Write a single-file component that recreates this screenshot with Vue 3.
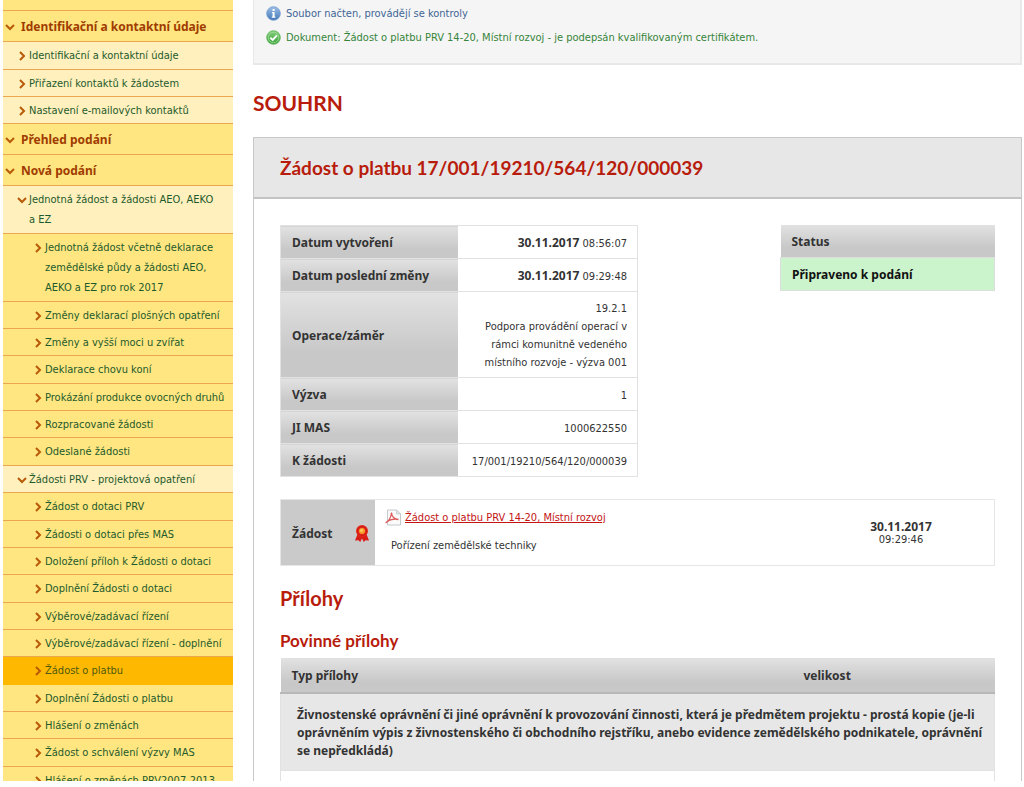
<script setup>
const menu = [
  {
    title: 'Identifikační a kontaktní údaje',
    items: [
      { label: 'Identifikační a kontaktní údaje' },
      { label: 'Přiřazení kontaktů k žádostem' },
      { label: 'Nastavení e-mailových kontaktů' }
    ]
  },
  { title: 'Přehled podání', items: [] },
  {
    title: 'Nová podání',
    items: [
      {
        label: 'Jednotná žádost a žádosti AEO, AEKO a EZ',
        children: [
          'Jednotná žádost včetně deklarace zemědělské půdy a žádosti AEO, AEKO a EZ pro rok 2017',
          'Změny deklarací plošných opatření',
          'Změny a vyšší moci u zvířat',
          'Deklarace chovu koní',
          'Prokázání produkce ovocných druhů',
          'Rozpracované žádosti',
          'Odeslané žádosti'
        ]
      },
      {
        label: 'Žádosti PRV - projektová opatření',
        children: [
          'Žádost o dotaci PRV',
          'Žádosti o dotaci přes MAS',
          'Doložení příloh k Žádosti o dotaci',
          'Doplnění Žádosti o dotaci',
          'Výběrové/zadávací řízení',
          'Výběrové/zadávací řízení - doplnění',
          'Žádost o platbu',
          'Doplnění Žádosti o platbu',
          'Hlášení o změnách',
          'Žádost o schválení výzvy MAS',
          'Hlášení o změnách PRV2007-2013'
        ]
      }
    ]
  }
]
const active = 'Žádost o platbu'
</script>

<template>
  <div class="page">
    <nav class="menu">
      <div class="menu-top"></div>
      <template v-for="section in menu" :key="section.title">
        <a href="#" class="section">
          <svg class="arrow" viewBox="0 0 10 10"><path d="M1 3 5 7 9 3" /></svg>
          <span>{{ section.title }}</span>
        </a>
        <ul v-if="section.items.length" class="list">
          <li v-for="item in section.items" :key="item.label">
            <a href="#" class="item">
              <svg v-if="item.children" class="arrow" viewBox="0 0 10 10"><path d="M1 3 5 7 9 3" /></svg>
              <svg v-else class="arrow" viewBox="0 0 10 10"><path d="M3 1 7 5 3 9" /></svg>
              <span>{{ item.label }}</span>
            </a>
            <ul v-if="item.children" class="list">
              <li v-for="leaf in item.children" :key="leaf">
                <a href="#" class="item leaf" :class="{ active: leaf === active }">
                  <svg class="arrow" viewBox="0 0 10 10"><path d="M3 1 7 5 3 9" /></svg>
                  <span>{{ leaf }}</span>
                </a>
              </li>
            </ul>
          </li>
        </ul>
      </template>
    </nav>

    <main class="content">
      <section class="messages">
        <p class="msg info">
          <svg viewBox="0 0 16 16">
            <defs><linearGradient id="blue" x1="0" y1="0" x2="0" y2="1"><stop offset="0" stop-color="#9dbfe6" /><stop offset="1" stop-color="#4478b8" /></linearGradient></defs>
            <circle cx="8" cy="8" r="7.3" fill="url(#blue)" stroke="#6b97cc" stroke-width=".8" />
            <path d="M7 3.2h2.2v2H7zM6.4 6.3h2.8v5h.8v1.2H6.200v-1.200H7V7.500h-.6z" fill="#fff" />
          </svg>
          <span>Soubor načten, provádějí se kontroly</span>
        </p>
        <p class="msg ok">
          <svg viewBox="0 0 16 16">
            <defs><linearGradient id="green" x1="0" y1="0" x2="0" y2="1"><stop offset="0" stop-color="#85cf7c" /><stop offset="1" stop-color="#38a238" /></linearGradient></defs>
            <circle cx="8" cy="8" r="7.3" fill="url(#green)" stroke="#58b355" stroke-width=".8" />
            <circle cx="8" cy="8" r="5.6" fill="none" stroke="#a9dda3" stroke-width=".8" />
            <path d="M4.6 8.2 7.2 10.6 11.6 5.8" fill="none" stroke="#fff" stroke-width="2" />
          </svg>
          <span>Dokument: Žádost o platbu PRV 14-20, Místní rozvoj - je podepsán kvalifikovaným certifikátem.</span>
        </p>
      </section>

      <h1>SOUHRN</h1>

      <section class="card">
        <h2 class="card-title">Žádost o platbu 17/001/19210/564/120/000039</h2>
        <div class="card-body">
          <div class="overview">
            <table class="grid details">
              <tbody>
                <tr><th scope="row">Datum vytvoření</th><td><b>30.11.2017</b> 08:56:07</td></tr>
                <tr><th scope="row">Datum poslední změny</th><td><b>30.11.2017</b> 09:29:48</td></tr>
                <tr><th scope="row">Operace/záměr</th><td class="tall">19.2.1<br>Podpora provádění operací v rámci komunitně vedeného místního rozvoje - výzva 001</td></tr>
                <tr><th scope="row">Výzva</th><td>1</td></tr>
                <tr><th scope="row">JI MAS</th><td>1000622550</td></tr>
                <tr><th scope="row">K žádosti</th><td>17/001/19210/564/120/000039</td></tr>
              </tbody>
            </table>
            <table class="grid status">
              <thead><tr><th scope="col">Status</th></tr></thead>
              <tbody><tr><td>Připraveno k podání</td></tr></tbody>
            </table>
          </div>

          <div class="request">
            <div class="request-label">
              <b>Žádost</b>
              <svg class="rosette" viewBox="0 0 14 17">
                <path d="M3 8 0 15.6l3.400-.4 1.800 1.800L7 13.600 8.800 17l1.800-1.800 3.400.4L11 8z" fill="#d91e18" />
                <circle cx="7" cy="6" r="6" fill="#e32a1c" />
                <circle cx="7" cy="6" r="4.500" fill="none" stroke="#c41612" stroke-width=".8" />
                <circle cx="7" cy="6" r="3" fill="#f7a02b" />
                <circle cx="6.500" cy="5.400" r="1.400" fill="#fbd067" />
              </svg>
            </div>
            <div class="request-main">
              <div class="file">
                <svg class="pdf" viewBox="0 0 16 16">
                  <path d="M2.500.5h9l4 4v11h-13z" fill="#fbfbfb" stroke="#c4c8cc" />
                  <path d="M11.500.5v4h4z" fill="#dfe3e6" stroke="#c4c8cc" stroke-width=".7" />
                  <path d="M.5 13.500C3 12.500 6.500 8 6.500 3M6.500 3C6.500 7 9.500 10 13.500 10M1.500 12.500C4 10.500 9 9.300 13.500 10" fill="none" stroke="#dd5a5c" stroke-width="1.300" />
                </svg>
                <a href="#">Žádost o platbu PRV 14-20, Místní rozvoj</a>
              </div>
              <p>Pořízení zemědělské techniky</p>
            </div>
            <div class="request-date"><b>30.11.2017</b><span>09:29:46</span></div>
          </div>

          <h2>Přílohy</h2>
          <h3>Povinné přílohy</h3>
          <table class="grid files">
            <thead>
              <tr><th scope="col">Typ přílohy</th><th scope="col" class="size">velikost</th></tr>
            </thead>
            <tbody>
              <tr><td colspan="2" class="kind">Živnostenské oprávnění či jiné oprávnění k provozování činnosti, která je předmětem projektu - prostá kopie (je-li oprávněním výpis z živnostenského či obchodního rejstříku, anebo evidence zemědělského podnikatele, oprávnění se nepředkládá)</td></tr>
              <tr><td></td><td></td></tr>
            </tbody>
          </table>
        </div>
      </section>
    </main>
  </div>
</template>

<style>
body { margin: 0; background: #fff; }
</style>

<style scoped>
.page {
  display: flex;
  gap: 20px;
  height: calc(100vh - 6px);
  padding: 0 2px 0 3px;
  overflow: hidden;
  box-sizing: border-box;
  font-family: "DejaVu Sans Condensed", "DejaVu Sans", sans-serif;
  font-size: 11px;
  line-height: 17px;
  color: #333;
}
b, th, .section, .kind, .status td { font: bold 12px/18px "Noto Sans", sans-serif; }
p, h1, h2, h3, ul { margin: 0; padding: 0; }
h1, h2, h3 { font-family: Lato, sans-serif; font-weight: bold; color: #b81c0c; }

.menu { flex: 0 0 230px; }
.menu-top { height: 10px; background: #ffe680; border-bottom: 1px solid #eba650; }
.list { list-style: none; }
.section, .item {
  display: flex;
  align-items: flex-start;
  box-sizing: border-box;
  border-bottom: 1px solid #eba650;
  text-decoration: none;
}
.section { min-height: 31px; padding: 7px 4px 5px 2px; background: #ffe680; color: #a03c00; }
.section .arrow { margin: 4px 6px 0 0; }
.item { min-height: 27px; padding: 4px 11px 2px 14px; background: #fff0bd; color: #1d5a2c; line-height: 20px; }
.item .arrow { margin: 5px 2px 0 0; }
.leaf { padding-right: 6px; padding-left: 30px; background: #ffe680; }
.list li:nth-child(3n + 1) > .item { padding-bottom: 3px; }
.active { background: #ffb800; border-bottom-color: #ffb800; color: #4c5a10; }
.arrow { flex: none; width: 10px; height: 10px; }
.arrow path { fill: none; stroke: #b85a08; stroke-width: 2; }

.content { flex: 1; min-width: 0; }
.messages {
  padding: 1px 12px 14px;
  border: solid #e8e8e8;
  border-width: 0 2px 2px 1px;
  background: #f5f5f5;
}
.msg { display: flex; align-items: center; gap: 5px; height: 24px; }
.msg svg { flex: none; width: 15px; height: 15px; }
.info { color: #3f6596; }
.ok { color: #36843a; }
h1 { margin: 25px 0 21px; font-size: 21px; line-height: 26px; }

.card { border: 1px solid #c8c8c8; border-bottom: 0; }
.card-title {
  padding: 17px 26px 16px;
  background: #e7e7e7;
  border-bottom: 2px solid #c3c3c3;
  font-size: 19px;
  line-height: 26px;
}
.card-body { padding: 26px; }
.overview { display: flex; justify-content: space-between; align-items: flex-start; margin-bottom: 22px; }
.grid { border-collapse: collapse; }
.grid th {
  padding: 8px 11px 6px;
  border: 0 solid #e2e2e2;
  background: linear-gradient(#e2e2e2, #c8c8c8 70%);
  text-align: left;
}
.details { width: 358px; }
.details tr { height: 33px; border: 1px solid #e2e2e2; }
.details th { width: 155px; }
.details td { padding: 8px 10px 6px; text-align: right; }
.details .tall { padding: 8px 10px 5px; line-height: 18px; }
.status { width: 215px; }
.status td { padding: 8px 11px 6px; border: 1px solid #dedede; background: #ccf4cc; color: #111; }

.request { display: flex; min-height: 65px; border: 1px solid #e6e6e6; }
.request-label {
  display: flex;
  align-items: center;
  justify-content: space-between;
  flex: 0 0 94px;
  padding: 2px 6px 0 11px;
  box-sizing: border-box;
  background: #cacaca;
}
.rosette { width: 14px; height: 17px; }
.request-main { flex: 1; padding: 9px 10px; }
.file { display: flex; align-items: center; gap: 4px; }
.file a { color: #c41414; }
.pdf { width: 16px; height: 17px; }
.request-main p { margin: 11px 0 0 6px; }
.request-date { flex: 0 0 186px; display: flex; flex-direction: column; justify-content: center; text-align: center; line-height: 13px; }
.request-date b { line-height: 13px; }

.card-body h2 { margin-top: 19px; font-size: 20px; line-height: 26px; }
.card-body h3 { margin: 20px 0 7px; font-size: 17px; line-height: 20px; }
.files { width: 100%; }
.files th { padding: 9px 11px 7px; border-bottom: 2px solid #b8b8b8; }
.files .size { width: 180px; }
.files td { height: 30px; padding: 0; border: 1px solid #e2e2e2; border-width: 1px 0; }
.files tbody { border: 1px solid #e2e2e2; }
.files .kind { padding: 12px 8px 10px 16px; background: #e7e7e7; }
</style>
